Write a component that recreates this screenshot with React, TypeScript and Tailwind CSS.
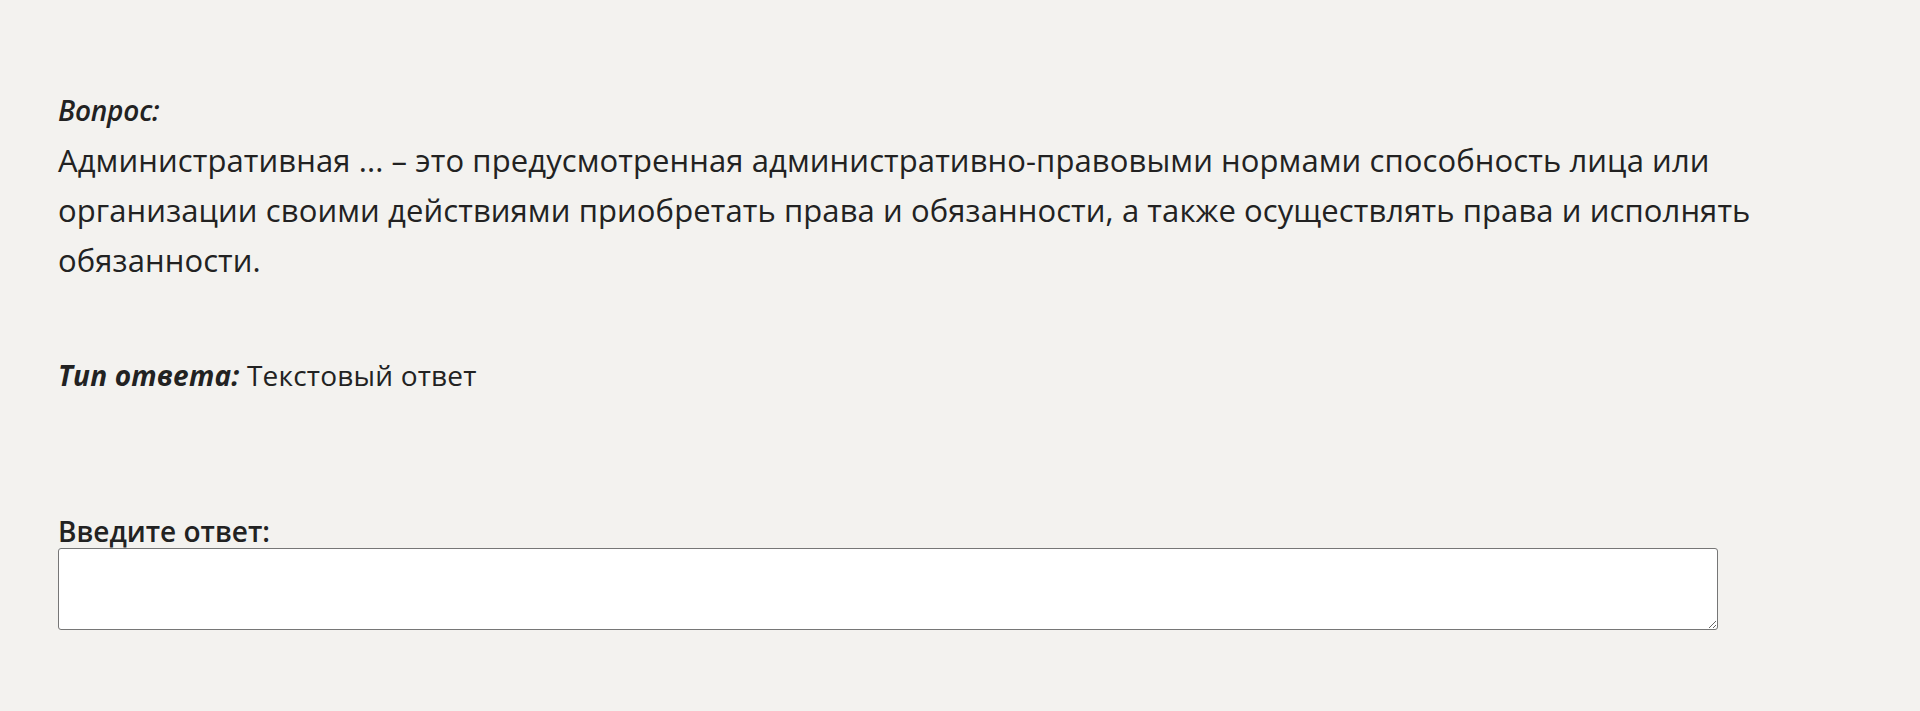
export default function App() {
  return (
    <div className="min-h-[711px] bg-[#f3f2ef] px-[58px] pt-[93px] text-[#222222] font-['Open_Sans',sans-serif]">
      <p className="text-[28px] leading-[34px] font-semibold italic tracking-[-0.2px]">Вопрос:</p>
      <p className="mt-[8px] max-w-[1710px] text-[31px] leading-[50px] tracking-[0.1px]">
        Административная ... – это предусмотренная административно-правовыми нормами способность лица или
        организации своими действиями приобретать права и обязанности, а также осуществлять права и исполнять
        обязанности.
      </p>
      <p className="mt-[66px] text-[28px] leading-[48px] tracking-[0.2px]">
        <span className="font-bold italic">Тип ответа:</span> Текстовый ответ
      </p>
      <label className="mt-[116px] block text-[28px] leading-[33px] font-semibold">Введите ответ:</label>
      <textarea className="block h-[82px] w-[1660px] rounded-[3px] border border-[#767676] bg-white px-2 py-1 text-[20px] outline-none" />
    </div>
  );
}
